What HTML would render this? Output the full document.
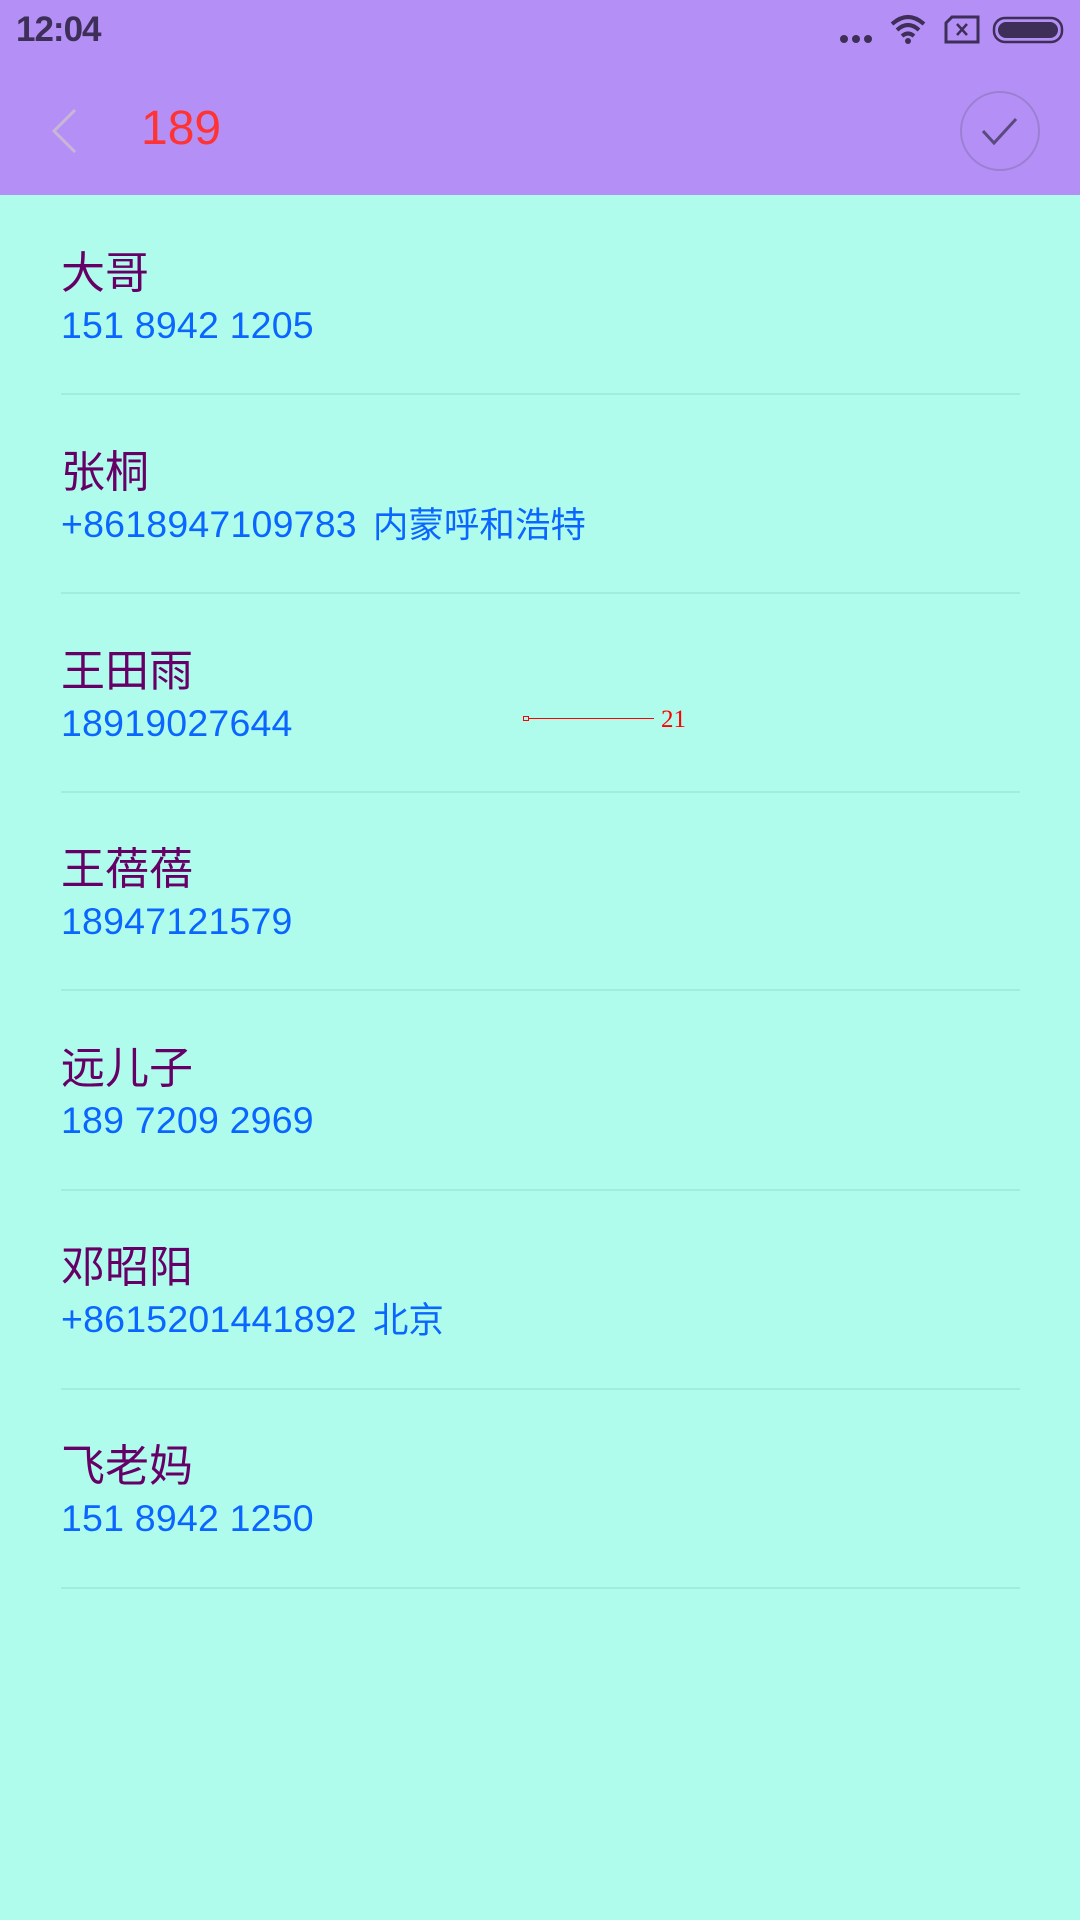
<!DOCTYPE html>
<html><head><meta charset="utf-8"><style>
body{margin:0;width:1080px;height:1920px;background:#b0fcec;position:relative;overflow:hidden;font-family:"Liberation Sans","Noto Sans CJK SC",sans-serif}
.hdr{position:absolute;left:0;top:0;width:1080px;height:195px;background:#b48ff5}
.a{position:absolute;white-space:nowrap}
.nm{position:absolute;left:61px;font-size:44px;color:#660066;line-height:1}
.ph{position:absolute;left:61px;font-size:37.5px;color:#0a66ff;line-height:1;letter-spacing:0.2px}
.ph span{font-size:35.5px;margin-left:16px;letter-spacing:0}
.dv{position:absolute;left:61px;width:959px;height:2px;background:#a2ecdb}
</style></head><body>
<div class="hdr"></div>
<div class="a" style="left:16px;top:10px;font-size:35px;font-weight:bold;color:#3d2f57;letter-spacing:-1px">12:04</div>
<svg class="a" style="left:835px;top:10px" width="240" height="40" viewBox="0 0 240 40">
<circle cx="9" cy="29" r="4" fill="#3d2f57"/><circle cx="21" cy="29" r="4" fill="#3d2f57"/><circle cx="33" cy="29" r="4" fill="#3d2f57"/>
<path d="M57 14 Q73 0 89 14" stroke="#3d2f57" stroke-width="4" fill="none"/>
<path d="M62 20 Q73 10 84 20" stroke="#3d2f57" stroke-width="4" fill="none"/>
<path d="M67 26 Q73 21 79 26" stroke="#3d2f57" stroke-width="4" fill="none"/>
<circle cx="73" cy="31" r="3" fill="#3d2f57"/>
<path d="M117 7 L143 7 L143 32 L111 32 L111 13 Z" stroke="#3d2f57" stroke-width="3" fill="none"/>
<path d="M122 14 L132 25 M132 14 L122 25" stroke="#3d2f57" stroke-width="2.5"/>
<rect x="159" y="8" width="68" height="24" rx="11" stroke="#3d2f57" stroke-width="2.5" fill="none"/>
<rect x="163" y="12" width="60" height="16" rx="8" fill="#3d2f57"/>
</svg>
<svg class="a" style="left:45px;top:108px" width="40" height="46"><path d="M30 2 L9 23 L30 44" stroke="#c9b6d6" stroke-width="3" fill="none"/></svg>
<div class="a" style="left:141px;top:105px;font-size:48px;color:#ff3333;line-height:1">189</div>
<svg class="a" style="left:958px;top:89px" width="84" height="84"><circle cx="42" cy="42" r="39" stroke="#9a80d2" stroke-width="2" fill="none"/><path d="M25 42 L36 54 L58 30" stroke="#5a4a80" stroke-width="3" fill="none"/></svg>

<div class="nm" style="top:252px">大哥</div><div class="ph" style="top:307px">151 8942 1205</div><div class="dv" style="top:393px"></div>
<div class="nm" style="top:451px">张桐</div><div class="ph" style="top:506px">+8618947109783<span>内蒙呼和浩特</span></div><div class="dv" style="top:592px"></div>
<div class="nm" style="top:650px">王田雨</div><div class="ph" style="top:705px">18919027644</div><div class="dv" style="top:791px"></div>
<div class="nm" style="top:848px">王蓓蓓</div><div class="ph" style="top:903px">18947121579</div><div class="dv" style="top:989px"></div>
<div class="nm" style="top:1047px">远儿子</div><div class="ph" style="top:1102px">189 7209 2969</div><div class="dv" style="top:1189px"></div>
<div class="nm" style="top:1246px">邓昭阳</div><div class="ph" style="top:1301px">+8615201441892<span>北京</span></div><div class="dv" style="top:1388px"></div>
<div class="nm" style="top:1445px">飞老妈</div><div class="ph" style="top:1500px">151 8942 1250</div><div class="dv" style="top:1587px"></div>

<div class="a" style="left:523px;top:716px;width:4px;height:3px;border:1px solid #f00"></div>
<div class="a" style="left:529px;top:718px;width:125px;height:1px;background:#f00"></div>
<div class="a" style="left:661px;top:706px;font-family:'Liberation Serif',serif;font-size:25px;color:#f00">21</div>
</body></html>
